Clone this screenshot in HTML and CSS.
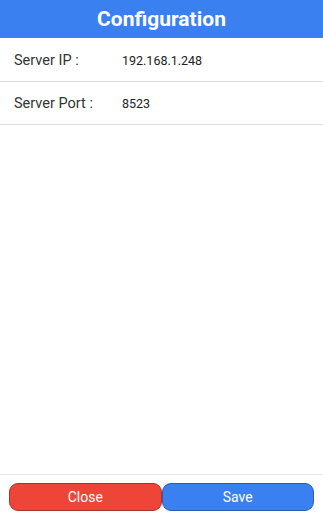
FILE: index.html
```html
<!DOCTYPE html>
<html lang="en">
<head>
    <meta charset="UTF-8">
    <title>Configuration</title>
    <link rel="stylesheet" href="styles.css">
</head>
<body>
    <div class="page">
        <div class="header">Configuration</div>

        <div class="settings">
            <div class="row">
                <span class="label">Server IP :</span>
                <span class="value">192.168.1.248</span>
            </div>
            <div class="row">
                <span class="label">Server Port :</span>
                <span class="value">8523</span>
            </div>
        </div>

        <div class="footer">
            <button class="btn close-btn">Close</button>
            <button class="btn save-btn">Save</button>
        </div>
    </div>
</body>
</html>
```

FILE: styles.css
```css
body {
    font-family: Roboto, 'Noto Sans', sans-serif;
    margin: 0;
    padding: 0;
    background-color: #fff;
}
.page {
    display: flex;
    flex-direction: column;
    height: 512px;
}
.header {
    background-color: #3a80f0;
    color: white;
    font-size: 21px;
    font-weight: bold;
    text-align: center;
    height: 38px;
    line-height: 38px;
}
.settings {
    flex: 1;
    padding-top: 1px;
}
.row {
    display: flex;
    align-items: center;
    height: 42px;
    border-bottom: 1px solid #dcdcdc;
    padding-left: 14px;
}
.label {
    width: 108px;
    font-size: 14.5px;
    color: #333;
}
.value {
    font-size: 12.5px;
    color: #222;
}
.footer {
    display: flex;
    border-top: 1px solid #e6e6e6;
    padding: 8px 9px 1px 9px;
}
.btn {
    flex: 1;
    height: 28px;
    border-radius: 9px;
    color: white;
    font-family: Roboto, sans-serif;
    font-size: 14px;
    padding: 0;
}
.close-btn {
    background-color: #ef4438;
    border: 1px solid #a8342b;
}
.save-btn {
    background-color: #3a80f0;
    border: 1px solid #2a5fb3;
}
```
